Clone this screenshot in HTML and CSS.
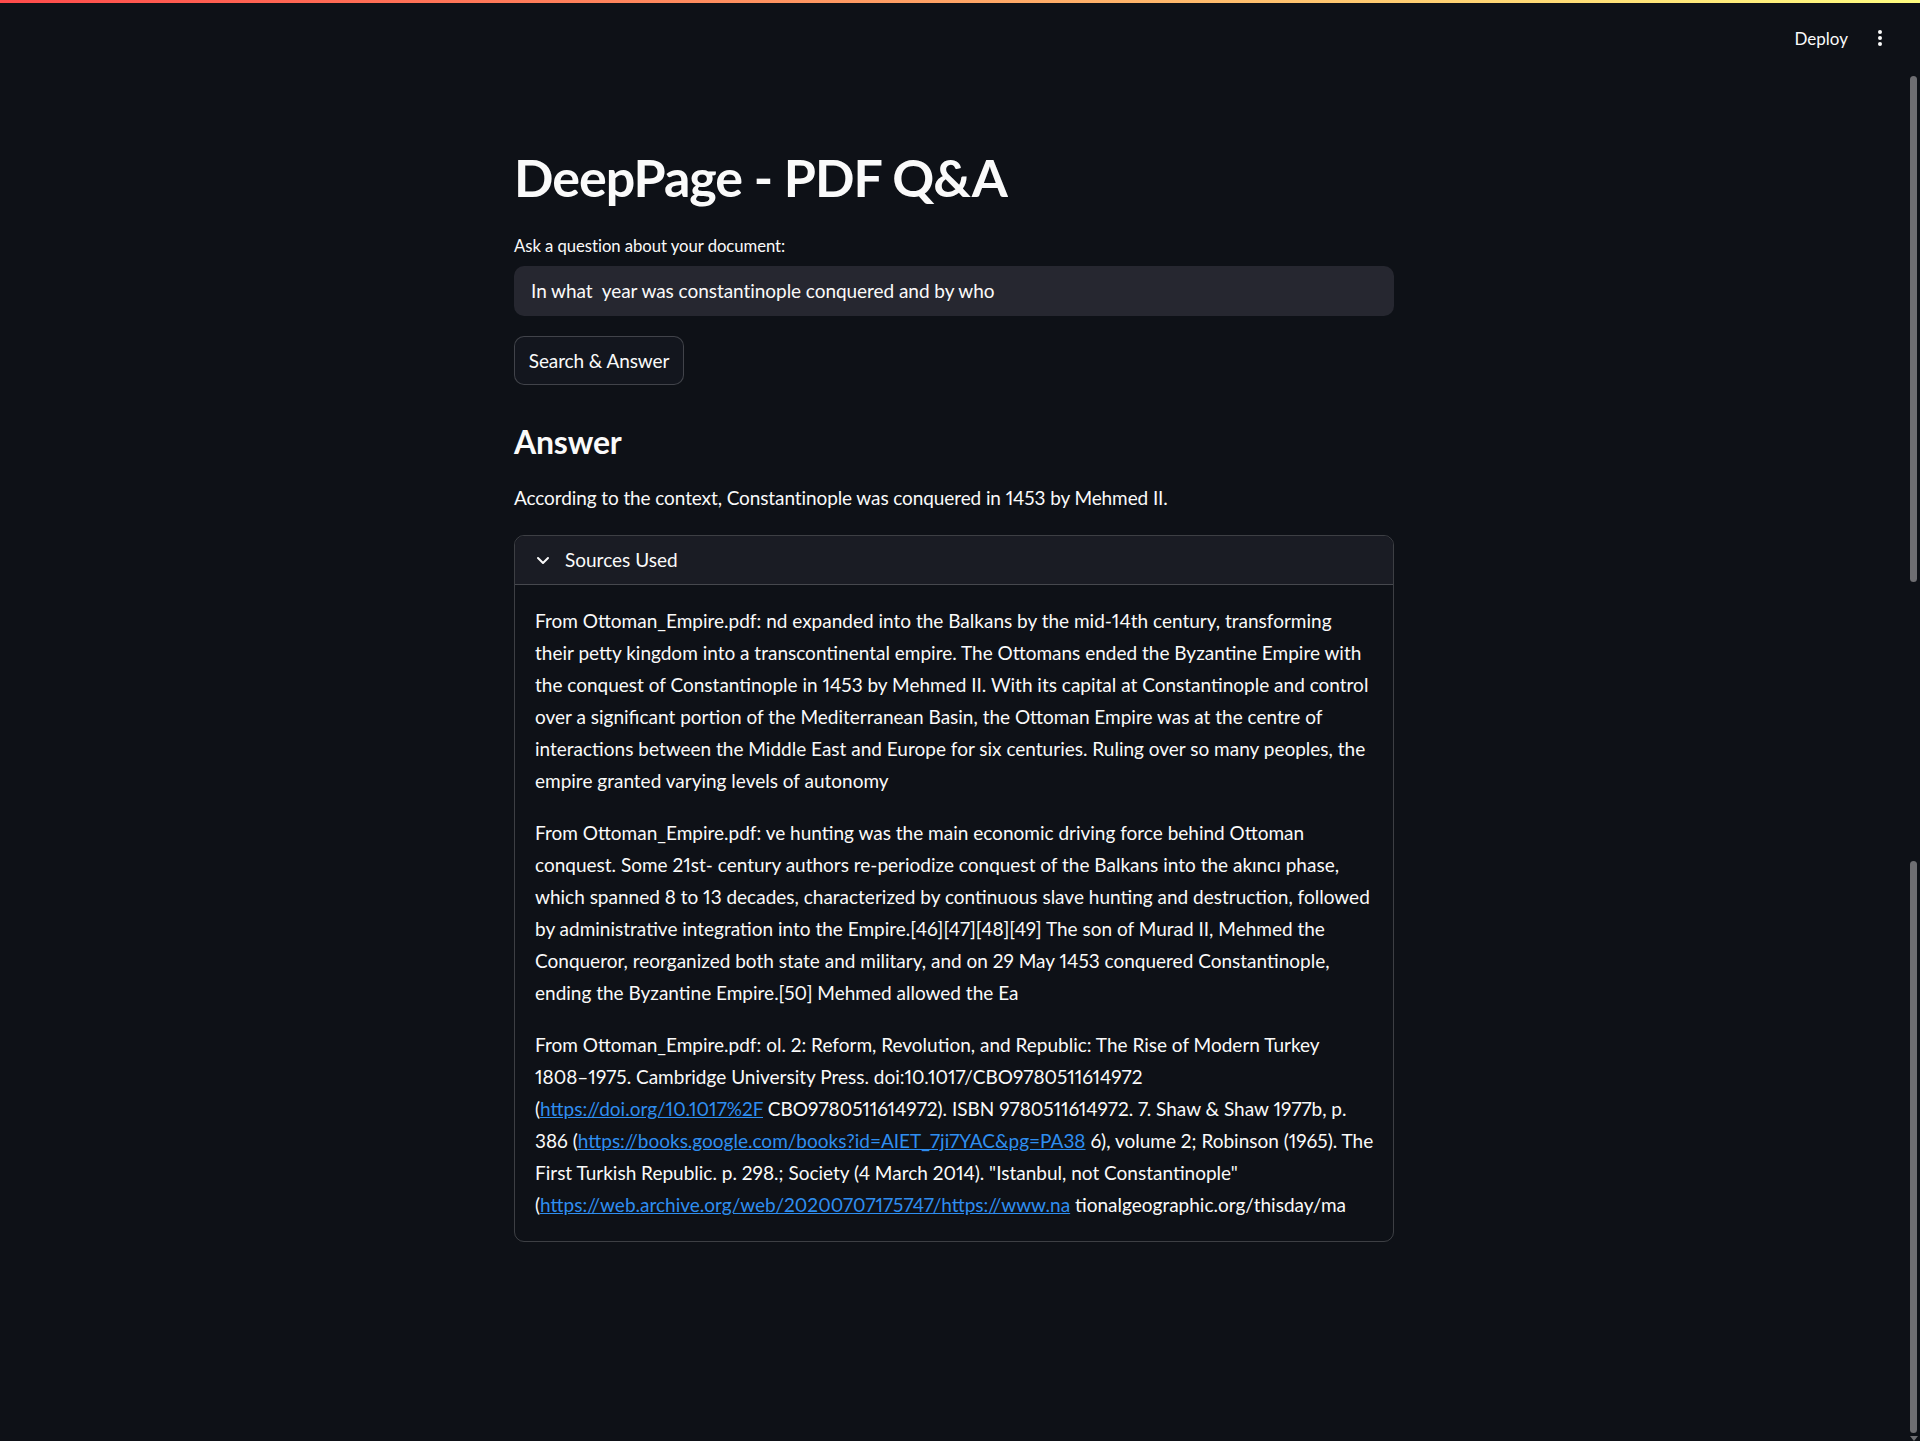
FILE: index.html
```html
<!DOCTYPE html>
<html lang="en">
<head>
<meta charset="utf-8">
<title>DeepPage - PDF Q&amp;A</title>
<link rel="stylesheet" href="styles.css">
</head>
<body>
<div class="decoration"></div>
<header class="topbar">
  <span class="deploy">Deploy</span>
  <svg class="kebab" width="8" height="18" viewBox="0 0 8 18" aria-hidden="true">
    <circle cx="4" cy="3" r="2" fill="#fafafa"/>
    <circle cx="4" cy="9" r="2" fill="#fafafa"/>
    <circle cx="4" cy="15" r="2" fill="#fafafa"/>
  </svg>
</header>

<main class="app">
  <div class="block">
    <h1 class="title">DeepPage - PDF Q&amp;A</h1>
    <label class="label" for="q">Ask a question about your document:</label>
    <div class="input-box"><input id="q" class="input" type="text" value="In what  year was constantinople conquered and by who"></div>
    <button class="btn">Search &amp; Answer</button>
    <h3 class="subheader">Answer</h3>
    <p class="answer">According to the context, Constantinople was conquered in 1453 by Mehmed II.</p>

    <section class="expander">
      <div class="exp-header">
        <svg class="chev" width="14" height="9" viewBox="0 0 14 9" aria-hidden="true">
          <path d="M2 2 L7 7 L12 2" fill="none" stroke="#fafafa" stroke-width="2" stroke-linecap="round" stroke-linejoin="round"/>
        </svg>
        <span class="exp-title">Sources Used</span>
      </div>
      <div class="exp-body">
        <p class="src">From Ottoman_Empire.pdf: nd expanded into the Balkans by the mid-14th century, transforming<br>their petty kingdom into a transcontinental empire. The Ottomans ended the Byzantine Empire with<br>the conquest of Constantinople in 1453 by Mehmed II. With its capital at Constantinople and control<br>over a significant portion of the Mediterranean Basin, the Ottoman Empire was at the centre of<br>interactions between the Middle East and Europe for six centuries. Ruling over so many peoples, the<br>empire granted varying levels of autonomy</p>
        <p class="src">From Ottoman_Empire.pdf: ve hunting was the main economic driving force behind Ottoman<br>conquest. Some 21st- century authors re-periodize conquest of the Balkans into the akıncı phase,<br>which spanned 8 to 13 decades, characterized by continuous slave hunting and destruction, followed<br>by administrative integration into the Empire.[46][47][48][49] The son of Murad II, Mehmed the<br>Conqueror, reorganized both state and military, and on 29 May 1453 conquered Constantinople,<br>ending the Byzantine Empire.[50] Mehmed allowed the Ea</p>
        <p class="src">From Ottoman_Empire.pdf: ol. 2: Reform, Revolution, and Republic: The Rise of Modern Turkey<br>1808–1975. Cambridge University Press. doi:10.1017/CBO9780511614972<br>(<a href="#">https://doi.org/10.1017%2F</a> CBO9780511614972). ISBN 9780511614972. 7. Shaw &amp; Shaw 1977b, p.<br>386 (<a href="#">https://books.google.com/books?id=AIET_7ji7YAC&amp;pg=PA38</a> 6), volume 2; Robinson (1965). The<br>First Turkish Republic. p. 298.; Society (4 March 2014). "Istanbul, not Constantinople"<br>(<a href="#">https://web.archive.org/web/20200707175747/https://www.na</a> tionalgeographic.org/thisday/ma</p>
      </div>
    </section>
  </div>
</main>

<div class="scroll-thumb thumb-top"></div>
<div class="scroll-thumb thumb-bottom"></div>
<div class="scroll-arrow"></div>
</body>
</html>
```

FILE: styles.css
```css
html, body {
  margin: 0;
  padding: 0;
}
body {
  background: #0e1117;
  color: #fafafa;
  font-family: Lato, "Noto Sans", sans-serif;
  font-feature-settings: "pnum" 1;
  font-variant-numeric: proportional-nums;
  letter-spacing: 0;
  min-height: 1441px;
  position: relative;
  overflow: hidden;
}
.decoration {
  height: 3px;
  background: linear-gradient(90deg, rgb(255, 75, 75), rgb(255, 253, 128));
}
.topbar {
  height: 72px;
  display: flex;
  align-items: center;
  justify-content: flex-end;
  padding-right: 36px;
  gap: 28px;
}
.deploy {
  font-size: 17px;
  color: #fafafa;
  margin-top: -2px;
}
.kebab {
  display: block;
  margin-top: -2px;
}
.app {
  padding-right: 12px;
}
.block {
  width: 880px;
  margin: 0 auto;
  display: flex;
  flex-direction: column;
  align-items: flex-start;
}
.title {
  margin: 71px 0 0 0;
  font-size: 52px;
  line-height: 62px;
  font-weight: 700;
  letter-spacing: -1px;
}
.label {
  margin-top: 27px;
  font-size: 16.7px;
  line-height: 22px;
  letter-spacing: -0.05px;
}
.input-box {
  margin-top: 9px;
  width: 100%;
  height: 50px;
  background: #262730;
  border-radius: 10px;
  display: flex;
  align-items: center;
}
.input {
  width: 100%;
  height: 100%;
  box-sizing: border-box;
  background: transparent;
  border: none;
  outline: none;
  color: #fafafa;
  font-family: inherit;
  font-size: 19px;
  letter-spacing: -0.05px;
  padding: 0 17px 2px 17px;
}
.btn {
  margin-top: 20px;
  height: 49px;
  width: 170px;
  box-sizing: border-box;
  background: #13161e;
  border: 1px solid rgba(250, 250, 250, 0.2);
  border-radius: 10px;
  color: #fafafa;
  font-family: inherit;
  font-size: 19px;
  letter-spacing: -0.1px;
  white-space: nowrap;
  text-align: center;
  padding: 0;
}
.subheader {
  margin: 37px 0 0 0;
  font-size: 32px;
  line-height: 40px;
  font-weight: 700;
  letter-spacing: -0.2px;
}
.answer {
  margin: 20px 0 0 0;
  font-size: 19px;
  line-height: 32px;
  letter-spacing: -0.1px;
}
.expander {
  margin-top: 21px;
  width: 100%;
  box-sizing: border-box;
  border: 1px solid rgba(250, 250, 250, 0.2);
  border-radius: 10px;
  overflow: hidden;
}
.exp-header {
  height: 48px;
  background: #1a1c24;
  border-bottom: 1px solid rgba(250, 250, 250, 0.2);
  display: flex;
  align-items: center;
  padding-left: 21px;
  gap: 15px;
}
.chev {
  display: block;
}
.exp-title {
  font-size: 19px;
  margin-top: -2px;
}
.exp-body {
  padding: 20px 20px;
}
.src {
  margin: 0 0 20px 0;
  font-size: 19px;
  line-height: 32px;
  white-space: nowrap;
}
.src:last-child {
  margin-bottom: 0;
}
.src a {
  color: #2f8ef0;
  text-decoration: underline;
}
.scroll-thumb {
  position: absolute;
  left: 1910px;
  width: 7px;
  background: #6e6e72;
  border-radius: 4px;
}
.thumb-top {
  top: 76px;
  height: 506px;
}
.thumb-bottom {
  top: 861px;
  height: 572px;
}
.scroll-arrow {
  position: absolute;
  left: 1910px;
  top: 1436px;
  width: 0;
  height: 0;
  border-left: 4px solid transparent;
  border-right: 4px solid transparent;
  border-top: 5px solid #6e6e72;
}
```
